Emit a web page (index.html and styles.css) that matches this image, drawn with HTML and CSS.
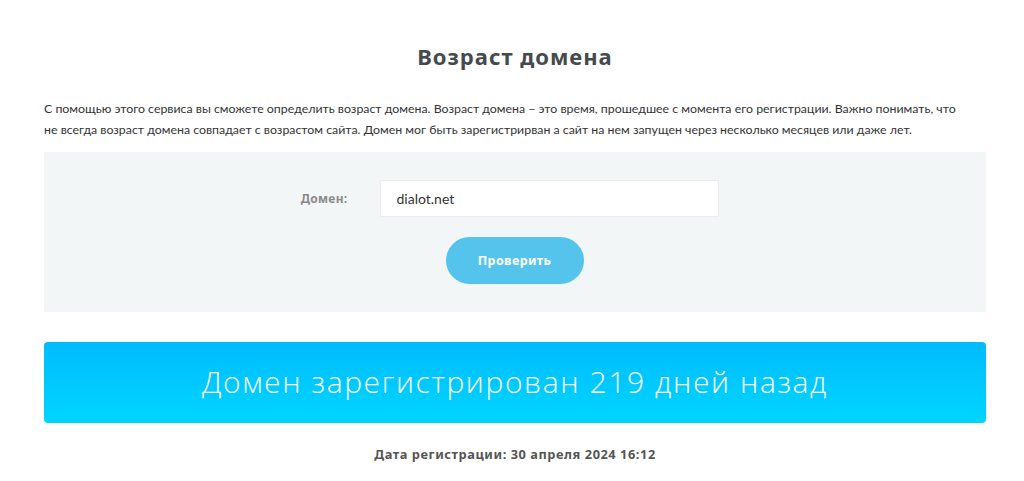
FILE: index.html
```html
<!DOCTYPE html>
<html lang="ru">
<head>
<meta charset="utf-8">
<link rel="stylesheet" href="styles.css">
</head>
<body>
<div class="page">
  <h1 class="title">Возраст домена</h1>
  <p class="intro">С помощью этого сервиса вы сможете определить возраст домена. Возраст домена – это время, прошедшее с момента его регистрации. Важно понимать, что не всегда возраст домена совпадает с возрастом сайта. Домен мог быть зарегистрирван а сайт на нем запущен через несколько месяцев или даже лет.</p>
  <form class="panel">
    <div class="row">
      <label class="label" for="d">Домен:</label>
      <input class="input" id="d" type="text" value="dialot.net">
    </div>
    <button class="btn" type="button">Проверить</button>
  </form>
  <div class="result">Домен зарегистрирован 219 дней назад</div>
  <div class="date">Дата регистрации: 30 апреля 2024 16:12</div>
</div>
</body>
</html>
```
FILE: styles.css
```css
html, body { margin: 0; padding: 0; background: #fff; }
body { font-family: "Lato", "Liberation Sans", sans-serif; color: #333; }
.page { width: 942px; margin-left: 44px; }
.title {
  margin: 0; padding-top: 42px; height: 56px;
  font-family: "Noto Sans", sans-serif; font-weight: 700; font-size: 22px; letter-spacing: 1px;
  color: #454a4f; text-align: center; line-height: 28px;
}
.intro { margin: 0; padding-right: 24px; font-size: 12.35px; line-height: 21px; color: #333; }
.panel {
  margin-top: 12px; background: #f3f6f7; height: 160px; box-sizing: border-box;
  padding-top: 28px; display: flex; flex-direction: column; align-items: center;
}
.row { display: flex; align-items: center; margin-left: -60px; }
.label {
  width: 96px; text-align: right; padding-right: 32px; box-sizing: content-box;
  font-family: "Noto Sans", sans-serif; font-weight: 700; font-size: 12px; letter-spacing: 0.3px; color: #8a8a8a;
}
.input {
  width: 339px; height: 37px; box-sizing: border-box; border: 1px solid #ececec;
  background: #fff; padding: 0 16px; font-family: "Lato", sans-serif; font-size: 14px; color: #333;
  outline: none;
}
.btn {
  margin-top: 20px; width: 138px; height: 47px; border: 0; border-radius: 24px;
  background: #55c4ec; color: #fff; font-family: "Noto Sans", sans-serif; font-weight: 700;
  font-size: 12.5px; letter-spacing: 0.4px; margin-left: -1px;
}
.result {
  margin-top: 30px; height: 81px; border-radius: 4px;
  background: linear-gradient(to bottom, #00bcfe, #00d5ff);
  color: #fff; font-family: "Open Sans", sans-serif; font-weight: 300; font-size: 30px; letter-spacing: 1.6px;
  display: flex; align-items: center; justify-content: center; padding-bottom: 2px; box-sizing: border-box;
}
.date {
  margin-top: 22px; text-align: center; font-family: "Noto Sans", sans-serif;
  font-weight: 700; font-size: 12.8px; letter-spacing: 0.55px; color: #555;
}
```
